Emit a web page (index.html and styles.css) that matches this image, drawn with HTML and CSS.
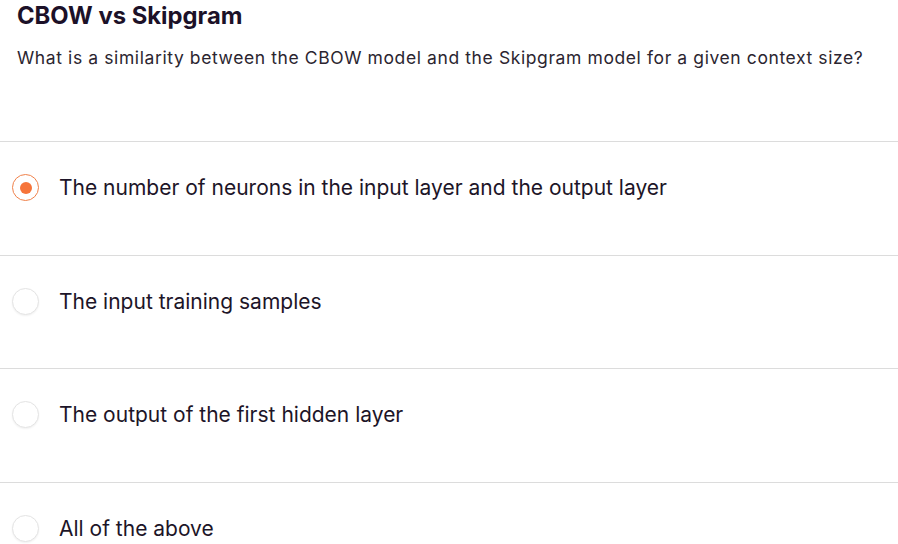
FILE: index.html
```html
<!DOCTYPE html>
<html lang="en">
<head>
    <meta charset="UTF-8">
    <meta name="viewport" content="width=device-width, initial-scale=1.0">
    <title>CBOW vs Skipgram</title>
    <link rel="stylesheet" href="styles.css">
</head>
<body>
    <div class="quiz">
        <h1 class="quiz-title">CBOW vs Skipgram</h1>
        <p class="quiz-question">What is a similarity between the CBOW model and the Skipgram model for a given context size?</p>
        <ul class="options">
            <li class="option selected"><span class="radio"></span>The number of neurons in the input layer and the output layer</li>
            <li class="option"><span class="radio"></span>The input training samples</li>
            <li class="option"><span class="radio"></span>The output of the first hidden layer</li>
            <li class="option"><span class="radio"></span>All of the above</li>
        </ul>
    </div>
</body>
</html>
```

FILE: styles.css
```css
body {
    margin: 0;
    background: #fff;
    font-family: Inter, "Noto Sans", sans-serif;
    color: #1d1528;
}
.quiz-title {
    margin: 0;
    padding: 2px 17px 0;
    font-size: 23.8px;
    font-weight: 700;
    line-height: 28px;
    color: #1c1128;
}
.quiz-question {
    margin: 16px 0 0;
    padding: 0 17px;
    font-size: 17.5px;
    letter-spacing: 0.6px;
    line-height: 24px;
    color: #2b2530;
}
.options {
    list-style: none;
    margin: 71px 0 0;
    padding: 0;
}
.option {
    display: flex;
    align-items: flex-start;
    height: 80.5px;
    padding: 32px 0 0 12px;
    border-top: 1px solid #dcdcdc;
    font-size: 21px;
    line-height: 27px;
}
.radio {
    flex: none;
    width: 27px;
    height: 27px;
    box-sizing: border-box;
    border-radius: 50%;
    border: 1px solid #e4e4e4;
    box-shadow: 0 1px 2px rgba(0, 0, 0, 0.06);
    margin-right: 20px;
    display: flex;
    align-items: center;
    justify-content: center;
    background: #fff;
}
.option.selected .radio {
    border-color: #f0814a;
    box-shadow: none;
}
.option.selected .radio::after {
    content: "";
    width: 12px;
    height: 12px;
    border-radius: 50%;
    background: #f6743a;
}
```
